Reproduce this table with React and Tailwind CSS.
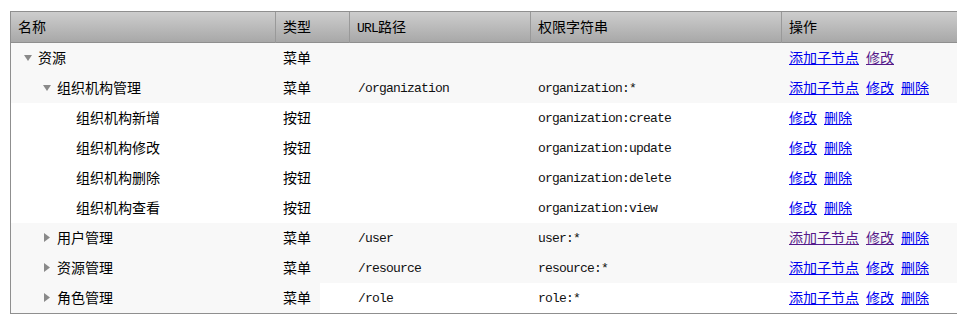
import React from "react";

const cjk = { fontFamily: '"Noto Sans CJK SC", "Noto Sans", sans-serif' };
const mono = { fontFamily: '"Liberation Mono", "DejaVu Sans Mono", monospace' };

const rows = [
  { name: "资源", level: 0, icon: "down", type: "菜单", url: "", perm: "", ops: [["添加子节点", false], ["修改", true]], bg: "gray" },
  { name: "组织机构管理", level: 1, icon: "down", type: "菜单", url: "/organization", perm: "organization:*", ops: [["添加子节点", false], ["修改", false], ["删除", false]], bg: "gray" },
  { name: "组织机构新增", level: 2, icon: null, type: "按钮", url: "", perm: "organization:create", ops: [["修改", false], ["删除", false]], bg: "white" },
  { name: "组织机构修改", level: 2, icon: null, type: "按钮", url: "", perm: "organization:update", ops: [["修改", false], ["删除", false]], bg: "white" },
  { name: "组织机构删除", level: 2, icon: null, type: "按钮", url: "", perm: "organization:delete", ops: [["修改", false], ["删除", false]], bg: "white" },
  { name: "组织机构查看", level: 2, icon: null, type: "按钮", url: "", perm: "organization:view", ops: [["修改", false], ["删除", false]], bg: "white" },
  { name: "用户管理", level: 1, icon: "right", type: "菜单", url: "/user", perm: "user:*", ops: [["添加子节点", true], ["修改", true], ["删除", false]], bg: "gray" },
  { name: "资源管理", level: 1, icon: "right", type: "菜单", url: "/resource", perm: "resource:*", ops: [["添加子节点", false], ["修改", false], ["删除", false]], bg: "gray" },
  { name: "角色管理", level: 1, icon: "right", type: "菜单", url: "/role", perm: "role:*", ops: [["添加子节点", false], ["修改", false], ["删除", false]], bg: "split" },
];

function Tri({ dir }) {
  if (dir === "down") {
    return (
      <svg width="8" height="6" viewBox="0 0 8 6" className="ml-[5px] mt-[2px]">
        <path d="M0 0 H8 L4 6 Z" fill="#8a8a8a" />
      </svg>
    );
  }
  return (
    <svg width="6" height="9" viewBox="0 0 6 9" className="ml-[6px] mt-[1px]">
      <path d="M0 0 L6 4.5 L0 9 Z" fill="#8a8a8a" />
    </svg>
  );
}

const grid = "grid grid-cols-[264px_74px_181px_251px_1fr]";

export default function App() {
  return (
    <div className="w-[957px] h-[322px] overflow-hidden bg-white" style={cjk}>
      <div className="pt-[11px] pl-[10px]">
        <div className="w-[1000px] border-l border-t border-b border-[#8f8f8f] text-[14px] text-black">
          <div className={`${grid} h-[31px] border-b border-[#8f8f8f] bg-[linear-gradient(to_bottom,#cdcdcd,#a8a8a8)] leading-[29px]`}>
            <div className="pl-[7px]">名称</div>
            <div className="pl-[7px] border-l border-[#999999]">类型</div>
            <div className="pl-[7px] border-l border-[#999999]">
              <span style={mono} className="text-[13px] tracking-[-0.8px]">URL</span>路径
            </div>
            <div className="pl-[7px] border-l border-[#999999]">权限字符串</div>
            <div className="pl-[7px] border-l border-[#999999]">操作</div>
          </div>
          {rows.map((r, i) => (
            <div
              key={i}
              className={`${grid} h-[30px] leading-[28px] ${
                r.bg === "gray"
                  ? "bg-[#f8f8f8]"
                  : r.bg === "split"
                  ? "bg-[linear-gradient(to_right,#f8f8f8_309px,#ffffff_309px)]"
                  : "bg-white"
              }`}
            >
              <div className="pl-[8px] flex items-start h-[28px]">
                <div style={{ width: r.level * 19 }} className="shrink-0" />
                <div className="w-[19px] h-[28px] shrink-0 flex items-center">
                  {r.icon && <Tri dir={r.icon} />}
                </div>
                <span>{r.name}</span>
              </div>
              <div className="pl-[8px]">{r.type}</div>
              <div className="pl-[9px] pt-[2px] text-[13px] tracking-[-0.8px] text-[#111]" style={mono}>{r.url}</div>
              <div className="pl-[8px] pt-[2px] text-[13px] tracking-[-0.8px] text-[#111]" style={mono}>{r.perm}</div>
              <div className="pl-[8px] flex gap-[7px]">
                {r.ops.map(([t, visited], j) => (
                  <a
                    key={j}
                    href="#"
                    className={`underline ${visited ? "text-[#551a8b]" : "text-[#0000ee]"}`}
                  >
                    {t}
                  </a>
                ))}
              </div>
            </div>
          ))}
        </div>
      </div>
    </div>
  );
}
